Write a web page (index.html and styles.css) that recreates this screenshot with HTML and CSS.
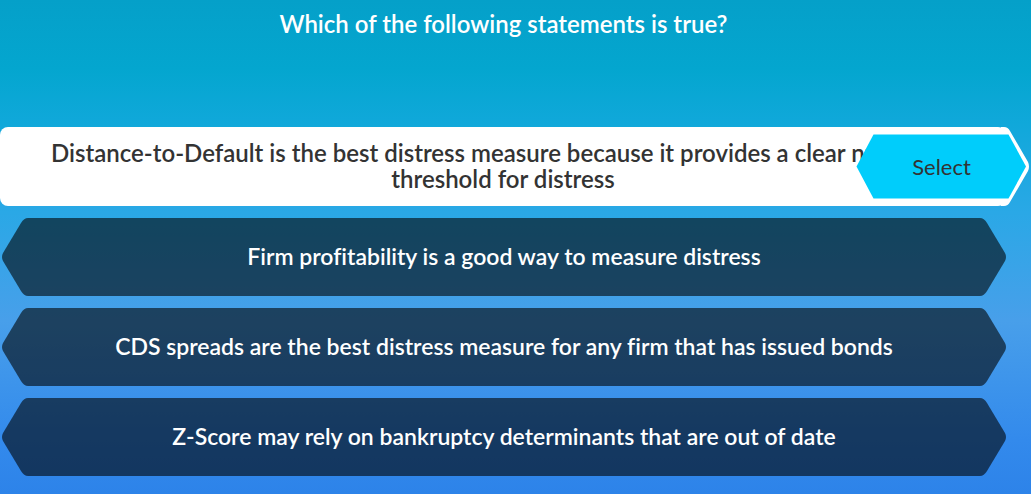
FILE: index.html
```html
<!DOCTYPE html>
<html lang="en">
<head>
<meta charset="utf-8">
<title>Quiz question</title>
<link rel="stylesheet" href="styles.css">
</head>
<body>
<main class="quiz">
  <h1 class="question">Which of the following statements is true?</h1>
  <div class="answers">
    <div class="answer answer-active">
      <svg class="tip" viewBox="0 0 28 79" aria-hidden="true"><path d="M0 0H3Q7 0 9 4L27 35Q29 39.500 27 44L9 75Q7 79 3 79H0Z"/></svg>
      <p class="text">Distance-to-Default is the best distress measure because it provides a clear numerical threshold for distress</p>
      <button class="select" type="button">
        <svg class="select-shape" viewBox="0 0 171 65" aria-hidden="true"><path d="M17.500 .5H152.500L170 32.500L152.500 64.500H17.500L.5 32.500Z"/></svg>
        <span class="select-label">Select</span>
      </button>
    </div>
    <button class="answer" type="button">
      <svg class="end" viewBox="0 0 30 78" aria-hidden="true"><path d="M30 0H26Q22 0 19 5L1 35Q-1 39 1 43L19 73Q22 78 26 78H30Z"/></svg>
      <span class="text">Firm profitability is a good way to measure distress</span>
      <svg class="end" viewBox="0 0 30 78" aria-hidden="true"><path d="M0 0H4Q8 0 11 5L29 35Q31 39 29 43L11 73Q8 78 4 78H0Z"/></svg>
    </button>
    <button class="answer" type="button">
      <svg class="end" viewBox="0 0 30 78" aria-hidden="true"><path d="M30 0H26Q22 0 19 5L1 35Q-1 39 1 43L19 73Q22 78 26 78H30Z"/></svg>
      <span class="text">CDS spreads are the best distress measure for any firm that has issued bonds</span>
      <svg class="end" viewBox="0 0 30 78" aria-hidden="true"><path d="M0 0H4Q8 0 11 5L29 35Q31 39 29 43L11 73Q8 78 4 78H0Z"/></svg>
    </button>
    <button class="answer" type="button">
      <svg class="end" viewBox="0 0 30 78" aria-hidden="true"><path d="M30 0H26Q22 0 19 5L1 35Q-1 39 1 43L19 73Q22 78 26 78H30Z"/></svg>
      <span class="text">Z-Score may rely on bankruptcy determinants that are out of date</span>
      <svg class="end" viewBox="0 0 30 78" aria-hidden="true"><path d="M0 0H4Q8 0 11 5L29 35Q31 39 29 43L11 73Q8 78 4 78H0Z"/></svg>
    </button>
  </div>
</main>
</body>
</html>
```
FILE: styles.css
```css
* { box-sizing: border-box; }
body {
  margin: 0;
  min-height: 100vh;
  background: linear-gradient(#05a0c9 0%, #04a6cf 14%, #10a8da 25%, #2aa8e6 43%, #489fea 65%, #338aec 89%, #2d83e9 100%);
  font-family: Lato, sans-serif;
  font-variant-ligatures: none;
}
.question {
  margin: 0;
  padding: 10px 24px 90px 0;
  color: #fff;
  font-size: 24px;
  line-height: 27px;
  font-weight: 600;
  text-align: center;
}
.answers { display: flex; flex-direction: column; gap: 12px; padding-right: 25px; }
.answer {
  display: flex;
  align-items: center;
  min-height: 78px;
  margin-left: 2px;
  padding: 0;
  border: 0;
  background: none;
  color: #fff;
  font: 600 23px/26px Lato, sans-serif;
  font-variant-ligatures: none;
}
.text {
  flex: 1;
  align-self: stretch;
  display: flex;
  align-items: center;
  justify-content: center;
  margin: 0;
  padding-bottom: 2px;
  background: rgba(0, 0, 0, .59);
  text-align: center;
}
.end { width: 30px; height: 78px; fill: rgba(0, 0, 0, .59); }
.answer-active {
  position: relative;
  min-height: 79px;
  margin-left: 0;
  color: #333;
  font-size: 24px;
  background: #fff;
  border-radius: 8px;
}
.answer-active .text { background: none; padding: 0 48px 2px; }
.tip { position: absolute; right: -23px; width: 28px; height: 79px; fill: #fff; }
.select {
  position: absolute;
  right: -21px;
  width: 171px;
  height: 65px;
  padding: 0;
  border: 0;
  background: none;
  color: #333;
  font: 400 22px/26px Lato, sans-serif;
}
.select-shape { display: block; width: 100%; height: 100%; fill: #00cdfb; }
.select-label { position: absolute; inset: 0; display: grid; place-items: center; }
```
